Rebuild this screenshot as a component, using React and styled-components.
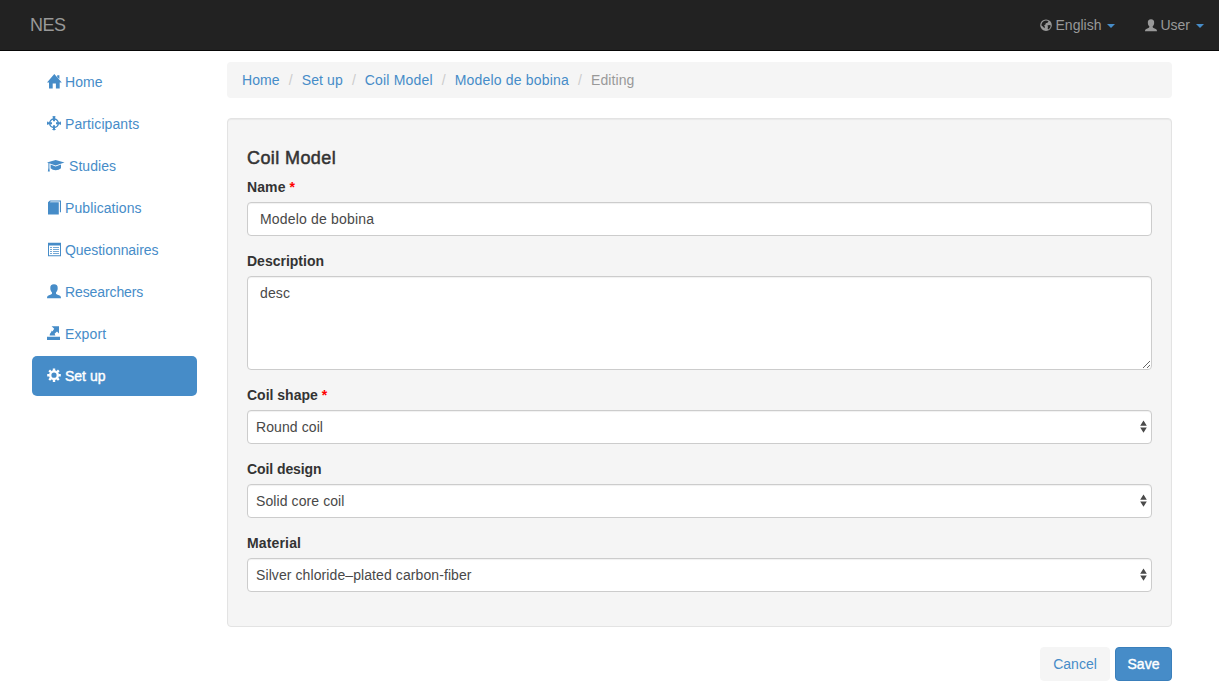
import React from "react";
import styled, { createGlobalStyle } from "styled-components";

const blue = "#468cc8";

const GlobalStyle = createGlobalStyle`
  * { box-sizing: border-box; }
  body {
    margin: 0;
    background: #fff;
    color: #333;
    font: 14px/20px "Liberation Sans", Arial, sans-serif;
  }
  input, select, textarea, button { font: inherit; }
  a { color: ${blue}; text-decoration: none; }
`;

const Navbar = styled.nav`
  height: 51px;
  padding: 0 15px 0 30px;
  display: flex;
  justify-content: space-between;
  align-items: center;
  background: #222;
  border-bottom: 1px solid #080808;
  color: #999;
`;

const Brand = styled.span`
  font-size: 18px;
  letter-spacing: -0.45px;
`;

const NavMenus = styled.div`
  display: flex;
  gap: 30px;
`;

const NavMenu = styled.span`
  display: flex;
  align-items: center;
`;

const Caret = styled.span`
  margin-left: 6px;
  margin-top: 2px;
  border-top: 4px solid ${blue};
  border-left: 4px solid transparent;
  border-right: 4px solid transparent;
`;

const Glyph = styled.svg`
  flex: none;
  width: ${(p) => p.$w}px;
  height: 15px;
  margin-right: ${(p) => p.$gap}px;
  margin-top: ${(p) => (p.$w === 12 ? 0 : -2)}px;
  fill: currentColor;
  overflow: visible;
`;

const Page = styled.div`
  display: flex;
  gap: 30px;
  padding: 11px 47px 0 32px;
`;

const Sidebar = styled.div`
  width: 165px;
  display: flex;
  flex-direction: column;
  gap: 2px;
`;

const SideLink = styled.a`
  height: 40px;
  padding: 0 15px;
  display: flex;
  align-items: center;
  border-radius: 5px;
  letter-spacing: ${(p) => p.$track || 0}px;
  ${(p) => p.$active && `background: ${blue}; color: #fff; -webkit-text-stroke: 0.4px #fff;`}
`;

const Main = styled.main`
  flex: 1;
`;

const Breadcrumb = styled.div`
  height: 36px;
  padding: 0 15px;
  display: flex;
  align-items: center;
  background: #f5f5f5;
  border-radius: 4px;
  margin-bottom: 20px;
`;

const Crumb = styled.span`
  color: #999;
  letter-spacing: ${(p) => p.$track || 0}px;
  &:not(:first-child)::before {
    content: "/";
    display: inline-block;
    width: 22px;
    text-align: center;
    color: #ccc;
    letter-spacing: 0;
  }
`;

const Well = styled.section`
  height: 509px;
  padding: 30px 19px 0;
  background: #f5f5f5;
  border: 1px solid #e3e3e3;
  border-radius: 4px;
  box-shadow: inset 0 1px 1px rgba(0, 0, 0, 0.05);
`;

const Title = styled.h4`
  margin: 0 0 9px;
  font-size: 18px;
  line-height: 19px;
  font-weight: 400;
  letter-spacing: 0.4px;
  -webkit-text-stroke: 0.5px #333;
`;

const Field = styled.div`
  margin-bottom: 15px;
`;

const Label = styled.label`
  display: block;
  margin-bottom: 5px;
  font-weight: 700;
  letter-spacing: ${(p) => p.$track || 0}px;
`;

const Required = styled.span`
  color: #f00;
`;

const controlStyle = `
  display: block;
  width: 100%;
  height: 34px;
  background: #fff;
  color: #484848;
  border: 1px solid #ccc;
  border-radius: 4px;
  outline: none;
  box-shadow: inset 0 1px 1px rgba(0, 0, 0, 0.06);
`;

const Input = styled.input`
  ${controlStyle}
  padding: 6px 12px;
  letter-spacing: 0.18px;
`;

const TextArea = styled.textarea`
  ${controlStyle}
  height: 94px;
  padding: 6px 12px;
  letter-spacing: 0.15px;
  resize: vertical;
`;

const SelectWrap = styled.div`
  position: relative;
`;

const Select = styled.select`
  ${controlStyle}
  appearance: none;
  padding: 6px 8px;
  letter-spacing: 0.09px;
`;

const Arrows = styled.svg`
  position: absolute;
  right: 5px;
  top: 10px;
  width: 7px;
  height: 13px;
  fill: #4a4a4a;
  pointer-events: none;
`;

const Actions = styled.div`
  display: flex;
  justify-content: flex-end;
  gap: 5px;
  margin-top: 20px;
`;

const Button = styled.button`
  width: ${(p) => (p.$primary ? 57 : 70)}px;
  height: 34px;
  padding: 0;
  border-radius: 4px;
  border: 1px solid ${(p) => (p.$primary ? "#3a7fbb" : "#f5f5f5")};
  background: ${(p) => (p.$primary ? blue : "#f5f5f5")};
  color: ${(p) => (p.$primary ? "#fff" : blue)};
  ${(p) => p.$primary && "-webkit-text-stroke: 0.4px #fff;"}
`;

const shapes = {
  home: <path d="M7.3 0 14.8 8.4H12.7V14.4H8.9V9.6H5.7V14.4H2V8.4H0L7.3 0ZM10.2 1.2H12.4V5L10.2 3Z" />,
  target: (
    <g fill="none" stroke="currentColor">
      <circle cx="7" cy="7.2" r="4.3" strokeWidth="1.5" />
      <path d="M7 .2V5.2M7 9.2V14.2M0 7.2H5M9 7.2H14" strokeWidth="2" />
      <path d="M5.4 .9H8.6M5.4 13.5H8.6M.7 5.6V8.8M13.3 5.6V8.8" strokeWidth="1" />
    </g>
  ),
  cap: (
    <>
      <path d="M0 4.4 8.6 2 17.5 4.4 8.6 7.6Z" />
      <path d="M3.6 6.6 8.6 8.6 14 6.6V10.3Q12 12.3 8.6 12.3 5.5 12.3 3.6 10.3Z" />
      <path d="M1.4 5H2.4V10L2.8 13.6H.8L1.4 10Z" />
    </>
  ),
  book: <path d="M1 2.2 3 .4H14V12.3H12.9V1.5H3.6L2.8 2.3H11.8V14.4H1Z" />,
  list: (
    <>
      <path fillRule="evenodd" d="M1 .8H14V14.2H1ZM2 3.4V13.3H13V3.4Z" />
      <path
        opacity="0.75"
        d="M3 5H5V6H3ZM6 5H12V6H6ZM3 7H5V8H3ZM6 7H12V8H6ZM3 9H5V10H3ZM6 9H12V10H6ZM3 11H5V12H3ZM6 11H12V12H6Z"
      />
    </>
  ),
  user: (
    <path d="M7 .2C9.6.2 10.9 1.8 10.7 4.2 10.7 6.4 9.8 7.4 9 8.4 8.8 9.8 9.2 10.2 11.3 11 13.2 11.6 14 12.2 14 14.2H0C0 12.2.8 11.6 2.7 11 4.8 10.2 5.2 9.8 5 8.4 4.2 7.4 3.3 6.4 3.3 4.2 3.1 1.8 4.4.2 7 .2Z" />
  ),
  export: (
    <path d="M0 10.8H13V14H0ZM4.6 .3H12V7.6L10 5.6 7.6 7.8 8.4 9.6H2.6Q2.6 7.8 4.2 6L4.8 4.6 5.4 5.6 7.2 2.8Z" />
  ),
  cog: (
    <g fill="none" stroke="currentColor">
      <circle cx="7" cy="7.2" r="3.8" strokeWidth="2.4" />
      <path
        strokeWidth="2.4"
        d="M7 .4V3M7 11.6V14M.2 7.2H2.5M11.5 7.2H13.8M2.2 2.4 3.8 4M10.2 10.4 11.8 12M2.2 12 3.8 10.4M10.2 4 11.8 2.4"
      />
    </g>
  ),
  globe: (
    <path
      fillRule="evenodd"
      d="M7 .4A6.8 6.8 0 1 1 7 14 6.8 6.8 0 1 1 7 .4ZM7 1.6 10 2.2 8.8 4.4 6.8 4.8 6 6.8 4.6 7.4 5.8 9 5.2 10.6 3.2 8.6 1.5 7.2 2.4 4.2 4.6 2.2ZM8.6 7.4 10.8 6.8 12.6 7.6 11.8 10.2 9.8 12.2 8.8 10.6 9.4 9.2Z"
    />
  ),
};

function Icon({ name, width = 14, box = width, gap = 4 }) {
  return (
    <Glyph $w={width} $gap={gap} viewBox={`0 0 ${box} 15`} aria-hidden="true">
      {shapes[name]}
    </Glyph>
  );
}

const links = [
  ["Home", "home", 0.1],
  ["Participants", "target", 0.1],
  ["Studies", "cap", 0.05],
  ["Publications", "book", 0.1],
  ["Questionnaires", "list", -0.05],
  ["Researchers", "user", -0.1],
  ["Export", "export", 0.12],
  ["Set up", "cog", 0],
];

const crumbs = [
  ["Home", 0.1],
  ["Set up", 0.1],
  ["Coil Model", 0.18],
  ["Modelo de bobina", 0.18],
];

function SelectField({ label, required, value, track }) {
  return (
    <Field>
      <Label $track={track}>
        {label} {required && <Required>*</Required>}
      </Label>
      <SelectWrap>
        <Select defaultValue={value}>
          <option>{value}</option>
        </Select>
        <Arrows viewBox="0 0 7 13">
          <path d="M3.5 .5 6.8 5.8H.2ZM.2 7.6H6.8L3.5 12.8Z" />
        </Arrows>
      </SelectWrap>
    </Field>
  );
}

export default function App() {
  return (
    <>
      <GlobalStyle />
      <Navbar>
        <Brand>NES</Brand>
        <NavMenus>
          <NavMenu>
            <Icon name="globe" width={12} box={14} />
            English
            <Caret />
          </NavMenu>
          <NavMenu>
            <Icon name="user" width={12} box={14} gap={3} />
            User
            <Caret />
          </NavMenu>
        </NavMenus>
      </Navbar>
      <Page>
        <Sidebar>
          {links.map(([label, icon, track]) => (
            <SideLink key={label} href="#" $track={track} $active={label === "Set up"}>
              <Icon name={icon} width={icon === "cap" ? 18 : 14} />
              {label}
            </SideLink>
          ))}
        </Sidebar>
        <Main>
          <Breadcrumb>
            {crumbs.map(([label, track]) => (
              <Crumb key={label} $track={track}>
                <a href="#">{label}</a>
              </Crumb>
            ))}
            <Crumb $track={0.1}>Editing</Crumb>
          </Breadcrumb>
          <Well>
            <Title>Coil Model</Title>
            <Field>
              <Label $track={0.1}>
                Name <Required>*</Required>
              </Label>
              <Input defaultValue="Modelo de bobina" />
            </Field>
            <Field>
              <Label>Description</Label>
              <TextArea defaultValue="desc" />
            </Field>
            <SelectField label="Coil shape" required value="Round coil" />
            <SelectField label="Coil design" value="Solid core coil" track={-0.08} />
            <SelectField label="Material" value="Silver chloride–plated carbon-fiber" track={0.15} />
          </Well>
          <Actions>
            <Button>Cancel</Button>
            <Button $primary>Save</Button>
          </Actions>
        </Main>
      </Page>
    </>
  );
}
